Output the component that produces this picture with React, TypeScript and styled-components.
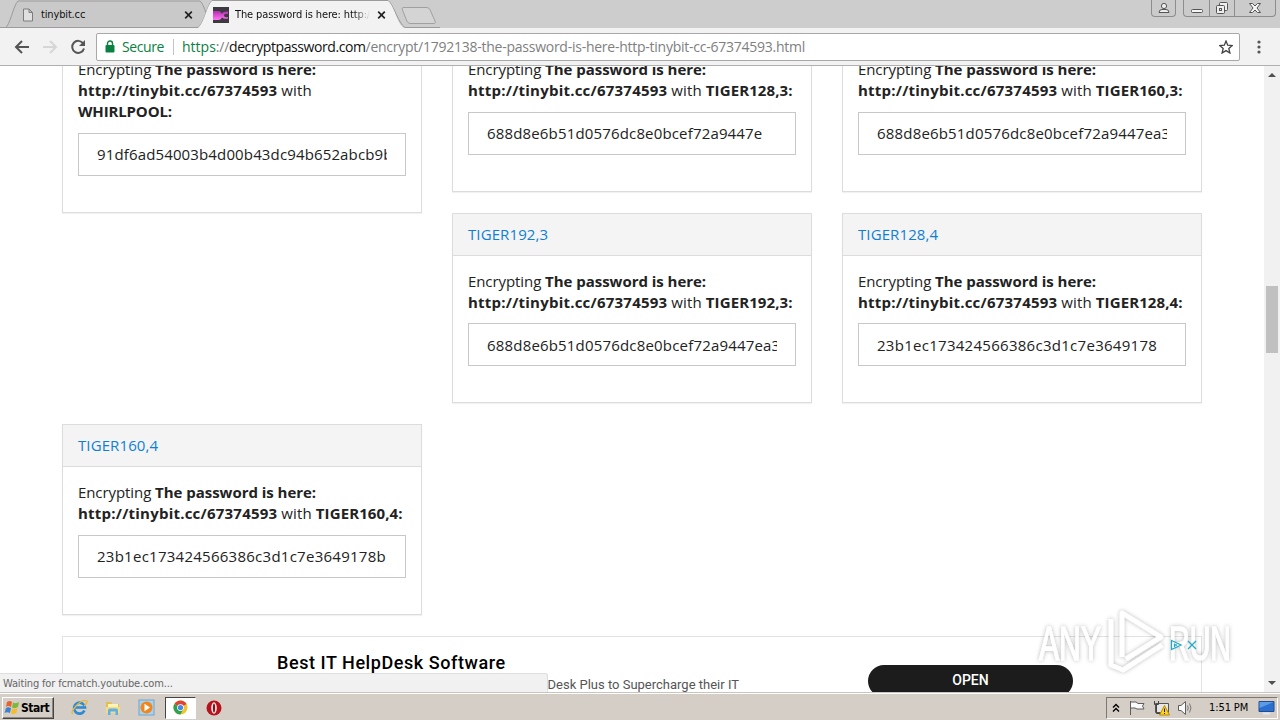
import React from 'react';
import styled, { createGlobalStyle } from 'styled-components';

const Global = createGlobalStyle`
  * { box-sizing: border-box; }
  body { margin: 0; background: #fff; overflow: hidden; }
`;

const ui = `'DejaVu Sans Condensed', 'DejaVu Sans', sans-serif`;

const Screen = styled.div`
  width: 1280px;
  height: 720px;
  display: flex;
  flex-direction: column;
  overflow: hidden;
  background: #fff;
`;

/* ---------- browser chrome ---------- */
const TabStrip = styled.header`
  position: relative;
  height: 28px;
  flex: none;
  display: flex;
  background: #cdcdcd;
`;
const TabShapes = styled.svg`
  position: absolute;
  left: 0;
  top: 0;
`;
const Tab = styled.div<{ $width: number; $pad: number }>`
  position: relative;
  width: ${p => p.$width}px;
  padding: 1px 0 0 ${p => p.$pad}px;
  display: flex;
  align-items: center;
`;
const TabTitle = styled.span<{ $width: number; $gap: number; $fade?: boolean; $track: number }>`
  width: ${p => p.$width}px;
  margin-left: ${p => p.$gap}px;
  overflow: hidden;
  white-space: nowrap;
  font: 11px/16px ${ui};
  letter-spacing: ${p => p.$track}px;
  color: #111;
  ${p => p.$fade && 'mask-image: linear-gradient(90deg, #000 88%, transparent);'}
`;
const WindowControls = styled.div`
  position: relative;
  margin-left: auto;
  display: flex;
  gap: 7px;
  padding-right: 4px;
  height: 17px;
`;
const ControlGroup = styled.div`
  display: flex;
  border: 1px solid #8d8d8d;
  border-top: 0;
  border-radius: 0 0 4px 4px;
  background: #cbcbcb;
`;
const Control = styled.div<{ $width: number }>`
  width: ${p => p.$width}px;
  display: flex;
  justify-content: center;
  align-items: center;
  & + & { border-left: 1px solid #8d8d8d; }
`;
const Toolbar = styled.div`
  height: 38px;
  flex: none;
  display: flex;
  align-items: center;
  background: #f2f2f2;
  border-bottom: 1px solid #b0b0b0;
`;
const NavButtons = styled.div`
  width: 96px;
  padding-left: 14px;
  display: flex;
  gap: 12px;
`;
const AddressBar = styled.div`
  width: 1144px;
  height: 28px;
  padding: 0 6px 0 8px;
  display: flex;
  align-items: center;
  border: 1px solid #a8a8a8;
  border-radius: 2px;
  background: #fff;
  font: 14px/20px 'Open Sans', sans-serif;
`;
const Secure = styled.span`
  margin-left: 7px;
  padding-right: 9px;
  border-right: 1px solid #c4c4c4;
  line-height: 16px;
  letter-spacing: -0.4px;
  color: #0b8043;
`;
const Url = styled.span`
  flex: 1;
  margin-left: 8px;
  white-space: nowrap;
  letter-spacing: -0.25px;
  color: #808080;
  i { font-style: normal; letter-spacing: 0; color: #0b8043; }
  b { font-weight: 400; letter-spacing: -0.42px; color: #111; }
`;
const MenuDots = styled.div`
  flex: 1;
  display: flex;
  justify-content: center;
  padding-right: 3px;
`;

/* ---------- page ---------- */
const Viewport = styled.div`
  position: relative;
  height: 626px;
  flex: none;
  display: flex;
  overflow: hidden;
`;
const Page = styled.main`
  width: 1264px;
  margin-top: -64.6px;
  padding-left: 62px;
`;
const Grid = styled.section`
  display: grid;
  grid-template-columns: repeat(3, 360px);
  grid-template-rows: repeat(3, 190.5px);
  gap: 21px 30px;
  align-items: start;
`;
const Card = styled.article<{ $col: number; $row: number; $span?: number }>`
  grid-column: ${p => p.$col};
  grid-row: ${p => p.$row} / span ${p => p.$span ?? 1};
  border: 1px solid #dcdcdc;
  box-shadow: 0 1px 1px rgba(0, 0, 0, 0.05);
  font: 15px/21px 'Open Sans', sans-serif;
  color: #222;
`;
const CardTitle = styled.h3`
  margin: 0;
  height: 42px;
  padding: 10px 15px;
  border-bottom: 1px solid #dcdcdc;
  background: #f4f4f4;
  font: inherit;
  letter-spacing: 0.1px;
  color: #0f7fd4;
`;
const CardBody = styled.div`
  padding: 15px 15px 36px;
`;
const Caption = styled.p`
  margin: 0 -6px 10.4px 0;
`;
const Run = styled.span<{ $track: number; $bold?: boolean }>`
  font-weight: ${p => (p.$bold ? 700 : 400)};
  letter-spacing: ${p => p.$track}px;
`;
const HashField = styled.div<{ $track: number }>`
  height: 43px;
  padding: 0.4px 18px 0;
  border: 1px solid #c8c8c8;
  line-height: 41px;
  letter-spacing: ${p => p.$track}px;
  span { display: block; overflow: hidden; white-space: nowrap; }
`;
const Ad = styled.section`
  position: relative;
  width: 1140px;
  height: 90px;
  margin-top: 21px;
  border: 1px solid #e2e2e2;
  display: flex;
  font-family: Roboto, sans-serif;
`;
const AdCopy = styled.div`
  width: 805px;
  padding: 14px 0 0 214px;
`;
const AdTitle = styled.div`
  font-size: 18px;
  line-height: 23px;
  font-weight: 500;
  letter-spacing: 0.56px;
  color: #000;
`;
const AdText = styled.div`
  width: 462px;
  margin-top: 1px;
  text-align: right;
  white-space: nowrap;
  font-size: 13px;
  line-height: 20px;
  color: #555;
`;
const OpenButton = styled.div`
  width: 205px;
  height: 32px;
  margin-top: 28px;
  border-radius: 16px;
  background: #1c1c1c;
  color: #fff;
  font-size: 14px;
  line-height: 30px;
  font-weight: 500;
  text-align: center;
`;
const AdChoices = styled.svg`
  position: absolute;
  z-index: 2;
  right: 0;
  top: 0;
`;
const Scrollbar = styled.div`
  width: 16px;
  height: 626px;
  padding: 7px 2px 7px 2px;
  display: flex;
  flex-direction: column;
  justify-content: space-between;
  align-items: center;
  background: #f1f1f1;
`;
const Thumb = styled.div`
  width: 12px;
  height: 67px;
  margin-bottom: 120px;
  background: #c0c0c0;
`;
const Status = styled.div`
  position: absolute;
  left: 0;
  bottom: 0;
  width: 548px;
  height: 19px;
  padding-left: 3px;
  border: 1px solid #dedede;
  border-width: 1px 1px 0 0;
  border-radius: 0 3px 0 0;
  background: #f1f1f1;
  font: 11px/19px ${ui};
  color: #666;
  letter-spacing: -0.15px;
`;
const Watermark = styled.svg`
  position: absolute;
  left: 1028px;
  top: 536px;
`;

/* ---------- taskbar ---------- */
const Taskbar = styled.footer`
  height: 28px;
  flex: none;
  display: flex;
  align-items: center;
  padding-top: 2px;
  border-top: 1px solid #c9c5be;
  box-shadow: inset 0 1px #fff;
  background: #d5cec7;
`;
const Start = styled.div`
  width: 52px;
  height: 22px;
  margin-left: 2px;
  padding-left: 1px;
  display: flex;
  align-items: center;
  gap: 1px;
  border: 1px solid;
  border-color: #fff #444 #444 #fff;
  box-shadow: inset -1px -1px #8c8780;
  font: bold 12px/18px ${ui};
  letter-spacing: -0.5px;
  color: #000;
`;
const Launch = styled.div`
  display: flex;
  align-items: center;
  margin-left: 9px;
`;
const Slot = styled.div<{ $active?: boolean }>`
  width: ${p => (p.$active ? 31 : 33.6)}px;
  height: 22px;
  display: flex;
  align-items: center;
  justify-content: center;
  ${p => p.$active && 'border: 1px solid; border-color: #444 #fff #fff #444; background: #fff; margin: 0 1px;'}
`;
const Tray = styled.div`
  width: 172px;
  height: 22px;
  margin: 0 2px 0 auto;
  padding: 0 0 0 5px;
  display: flex;
  align-items: center;
  border: 1px solid;
  border-color: #7d7871 #fff #fff #7d7871;
  font: 11px/20px ${ui};
  color: #000;
`;
const Clock = styled.span`
  width: 40px;
  margin: 0 9px 0 17px;
  letter-spacing: -0.1px;
  white-space: nowrap;
`;

const cards = [
  { name: 'WHIRLPOOL', hash: '91df6ad54003b4d00b43dc94b652abcb9b7', col: 1, row: 1, span: 2, track: 0.14, nameTrack: -0.15 },
  { name: 'TIGER128,3', hash: '688d8e6b51d0576dc8e0bcef72a9447e', col: 2, row: 1, track: 0.16, nameTrack: 0.1 },
  { name: 'TIGER160,3', hash: '688d8e6b51d0576dc8e0bcef72a9447ea35', col: 3, row: 1, track: 0.18, nameTrack: 0.1 },
  { name: 'TIGER192,3', hash: '688d8e6b51d0576dc8e0bcef72a9447ea35', col: 2, row: 2, track: 0.18, nameTrack: 0.1 },
  { name: 'TIGER128,4', hash: '23b1ec173424566386c3d1c7e3649178', col: 3, row: 2, track: 0.28, nameTrack: 0.1 },
  { name: 'TIGER160,4', hash: '23b1ec173424566386c3d1c7e3649178b', col: 1, row: 3, track: 0.26, nameTrack: 0.1 },
];

const CloseX = () => (
  <svg width="9" height="8" viewBox="-.5 0 9 8"><path d="M.7.7l6.6 6.6M7.3.7L.7 7.3" stroke="#222" strokeWidth="1.7" /></svg>
);

const Tabs = () => (
  <TabStrip>
    <TabShapes width="440" height="28">
      <path d="M5 28C10 26 13 6 18 1H200C205 5 207 20 212 28Z" fill="#c9c9c9" stroke="#9b9b9b" />
      <path d="M0 27.5H198C204 24 207 5 212 .5H388C394 5 398 23 405 27.5H440" fill="none" stroke="#9b9b9b" />
      <path d="M198 28C204 24 207 5 212 1H388C394 5 397 24 404 28Z" fill="#f2f2f2" />
      <path d="M404 7.5H426C429 7.500 430 9 431 12L435 21C436 23 435 23.500 433 23.500H411C408 23.500 407 22 406 19L402.500 10C402 8 402 7.500 404 7.500Z" fill="#d4d4d4" stroke="#a0a0a0" />
    </TabShapes>
    <Tab $width={213} $pad={22}>
      <svg width="12" height="14" viewBox="0 0 12 14"><path d="M1.500 1H7L10.500 4.500V13H1.500ZM7 1V4.500H10.500" fill="#e0e0e0" stroke="#7c7c7c" /></svg>
      <TabTitle $width={143} $gap={7} $track={-0.15}>tinybit.cc</TabTitle>
      <CloseX />
    </Tab>
    <Tab $width={190} $pad={0}>
      <svg width="16" height="16" viewBox="0 0 16 16">
        <defs><linearGradient id="fav" x1="0" y1="0" x2="0" y2="1"><stop stopColor="#b52bb0" /><stop offset="1" stopColor="#ff78f2" /></linearGradient></defs>
        <path d="M0 0h16v16H0z" fill="#3c3a40" />
        <path d="M0 4H5Q8 4 8.800 7Q10 4 15 4.500V7Q11 6 11 8.500T15 10V11.500Q11 12.500 9 10.500Q8 13 5 13H0Z" fill="url(#fav)" />
      </svg>
      <TabTitle $width={135} $gap={6} $track={-0.12} $fade>The password is here: http://t</TabTitle>
      <svg width="7" />
      <CloseX />
    </Tab>
    <WindowControls>
      <ControlGroup>
        <Control $width={23}>
          <svg width="12" height="12" viewBox="0 0 12 12" fill="#eee" stroke="#555"><path d="M1 10.500Q1 7.500 4 7.500H8Q11 7.500 11 10.500Z" /><circle cx="6" cy="4" r="2.600" /></svg>
        </Control>
      </ControlGroup>
      <ControlGroup>
        <Control $width={25}>
          <svg width="14" height="14" viewBox="0 0 14 14"><rect x="1.500" y="8.500" width="11" height="3" rx="1" fill="#f5f5f5" stroke="#555" /></svg>
        </Control>
        <Control $width={25}>
          <svg width="14" height="14" viewBox="0 0 14 14" fill="#eee" stroke="#555"><rect x="4.500" y="1.500" width="8" height="8" rx="1" /><rect x="1.500" y="4.500" width="8" height="8" rx="1" /><rect x="4.500" y="7.500" width="2" height="2" /></svg>
        </Control>
        <Control $width={41}>
          <svg width="14" height="12" viewBox="0 0 14 12"><path d="M1.500 1.500H4.500L7 4L9.500 1.500H12.500L9 6L12.500 10.500H9.500L7 8L4.500 10.500H1.500L5 6Z" fill="#f5f5f5" stroke="#555" /></svg>
        </Control>
      </ControlGroup>
    </WindowControls>
  </TabStrip>
);

const BrowserBar = () => (
  <Toolbar>
    <NavButtons>
      <svg width="16" height="16" viewBox="0 0 16 16" fill="none" stroke="#555" strokeWidth="2"><path d="M15 8H2.500M8 2L2 8L8 14" /></svg>
      <svg width="16" height="16" viewBox="0 0 16 16" fill="none" stroke="#d6d6d6" strokeWidth="2"><path d="M1 8H13.500M8 2L14 8L8 14" /></svg>
      <svg width="16" height="16" viewBox="0 0 16 16"><path d="M13.200 4.500A6 6 0 1 0 14 9.500" fill="none" stroke="#555" strokeWidth="2" /><path d="M15 1V7H9Z" fill="#555" /></svg>
    </NavButtons>
    <AddressBar>
      <svg width="10" height="13" viewBox="0 0 10 13"><rect x=".5" y="5" width="9" height="7.500" rx="1" fill="#0b8043" /><path d="M2.500 6V3.500a2.500 2.500 0 0 1 5 0V6" fill="none" stroke="#0b8043" strokeWidth="1.400" /></svg>
      <Secure>Secure</Secure>
      <Url><i>https</i>://<b>decryptpassword.com</b>/encrypt/1792138-the-password-is-here-http-tinybit-cc-67374593.html</Url>
      <svg width="14" height="14" viewBox="0 0 14 14"><path d="M7 1L8.700 5.200L13.200 5.500L9.800 8.500L10.900 13L7 10.600L3.100 13L4.200 8.500L.8 5.500L5.300 5.200Z" fill="none" stroke="#444" strokeWidth="1.300" /></svg>
    </AddressBar>
    <MenuDots>
      <svg width="4" height="14" viewBox="0 0 4 14" fill="#555"><circle cx="2" cy="2" r="1.600" /><circle cx="2" cy="7" r="1.600" /><circle cx="2" cy="12" r="1.600" /></svg>
    </MenuDots>
  </Toolbar>
);

export default function App() {
  return (
    <Screen>
      <Global />
      <Tabs />
      <BrowserBar />
      <Viewport>
        <Page>
          <Grid>
            {cards.map(c => (
              <Card key={c.name} $col={c.col} $row={c.row} $span={c.span}>
                <CardTitle>{c.row > 1 && c.name}</CardTitle>
                <CardBody>
                  <Caption>
                    <Run $track={-0.08}>Encrypting </Run>
                    <Run $bold $track={-0.03}>The password is here:</Run><br />
                    <Run $bold $track={0.22}>http://tinybit.cc/67374593</Run>
                    <Run $track={0.12}> with </Run>
                    {c.span && <br />}
                    <Run $bold $track={c.nameTrack}>{c.name}:</Run>
                  </Caption>
                  <HashField $track={c.track}><span>{c.hash}</span></HashField>
                </CardBody>
              </Card>
            ))}
          </Grid>
          <Ad>
            <AdCopy>
              <AdTitle>Best IT HelpDesk Software</AdTitle>
              <AdText>eDesk Plus to Supercharge their IT</AdText>
            </AdCopy>
            <OpenButton>OPEN</OpenButton>
            <AdChoices width="32" height="16" viewBox="0 0 32 16" fill="none" stroke="#24a9c6" strokeWidth="1.300">
              <path d="M2.500 3.500L12 8L2.500 12.500ZM5.500 6.500V10M5.500 8H8" /><path d="M19 4L27 12M27 4L19 12" />
            </AdChoices>
          </Ad>
        </Page>
        <Scrollbar>
          <svg width="8" height="4"><path d="M0 4L4 0L8 4Z" fill="#505050" /></svg>
          <Thumb />
          <svg width="8" height="4"><path d="M0 0L4 4L8 0Z" fill="#505050" /></svg>
        </Scrollbar>
        <Status>Waiting for fcmatch.youtube.com...</Status>
        <Watermark width="216" height="80" viewBox="0 0 216 80">
          <defs><filter id="glow" x="-10%" y="-10%" width="120%" height="120%"><feDropShadow dx="0" dy="0" stdDeviation="2" floodColor="#000" floodOpacity=".3" /></filter></defs>
          <g filter="url(#glow)" fill="#fff" stroke="#fff" fontFamily="Liberation Sans, sans-serif" fontSize="49">
            <text x="11" y="58" textLength="62" lengthAdjust="spacingAndGlyphs">ANY</text>
            <text x="141" y="58" textLength="62" lengthAdjust="spacingAndGlyphs">RUN</text>
            <path d="M94 55V11L133 35L98 57M94 30V55M83 17V63L95 68L134 43" fill="none" strokeWidth="4.500" strokeLinejoin="round" />
          </g>
        </Watermark>
      </Viewport>
      <Taskbar>
        <Start>
          <svg width="16" height="16" viewBox="0 0 16 16"><path d="M3 2Q6 0 8 2L7 7Q4 5 2 7Z" fill="#e8622c" /><path d="M9 2.500Q12 4 15 2L14 7Q11 9 8 7.500Z" fill="#7db83a" /><path d="M2 8Q4 6.500 7 8L6 13Q3 11.500 .5 13Z" fill="#3d82cf" /><path d="M8 8.500Q10 10 13.500 8L12.500 13Q9 15 7 13.500Z" fill="#f4bd2d" /></svg>
          Start
        </Start>
        <Launch>
          <Slot>
            <svg width="17" height="17" viewBox="0 0 17 17" fill="none"><path d="M13.500 11.500A5.500 5.500 0 1 1 14 8.500H4.500" stroke="#2a8bd6" strokeWidth="2.700" /><path d="M2 15Q-1 14 5 7T16 2Q17 4 13 7" stroke="#e8b83a" strokeWidth="1.300" /></svg>
          </Slot>
          <Slot>
            <svg width="16" height="16" viewBox="0 0 16 16"><path d="M1 2H6L7 4H14V13H1Z" fill="#e2bd50" /><path d="M3 4H13V7H3Z" fill="#fff3b8" /><path d="M1 7H15V13H1Z" fill="#f5dc82" /><path d="M3 15V10Q3 8.500 5 8.500H11Q13 8.500 13 10V15H10.500V11.500H5.500V15Z" fill="#5fb0e4" /></svg>
          </Slot>
          <Slot>
            <svg width="17" height="17" viewBox="0 0 17 17"><rect x="1" y="1" width="15" height="15" fill="#a9d2ee" stroke="#6ea6d0" /><circle cx="8.500" cy="8.500" r="6" fill="#f0861c" /><path d="M6.500 4.800L12 8.500L6.500 12.200Z" fill="#fff" /></svg>
          </Slot>
          <Slot $active>
            <svg width="15" height="15" viewBox="0 0 16 16"><circle cx="8" cy="8" r="7.500" fill="#f2c52c" /><path d="M8 8L1.500 4.250A7.500 7.500 0 0 1 14.500 4.250Z" fill="#dd4438" /><path d="M8 8L1.500 4.250A7.500 7.500 0 0 0 8 15.500L11 9.700Z" fill="#2fa153" /><circle cx="8" cy="8" r="3.600" fill="#fff" /><circle cx="8" cy="8" r="2.800" fill="#4a86e8" /></svg>
          </Slot>
          <Slot>
            <svg width="16" height="16" viewBox="0 0 16 16"><circle cx="8" cy="8" r="7.500" fill="#b5121b" /><ellipse cx="8" cy="8" rx="2.800" ry="5.800" fill="#f8eaea" /><ellipse cx="8" cy="8" rx="1.100" ry="4.600" fill="#8e0d14" /></svg>
          </Slot>
        </Launch>
        <Tray>
          <svg width="8" height="10" viewBox="0 0 8 10" fill="none" stroke="#000" strokeWidth="1.400"><path d="M1 4.500L4 1.500L7 4.500M1 8.500L4 5.500L7 8.500" /></svg>
          <svg width="72" height="18" viewBox="0 0 72 18">
            <path d="M10.500 2V16M10.500 3H16L18 4.500H24L22.500 7L24 10H17L15 9H10.500" fill="#fafafa" stroke="#5d5d5d" />
            <path d="M35.500 4.500H48.500V13.500H35.500Z" fill="#e6e6e6" stroke="#555" /><path d="M34.500 2V5.500H38.500V2M36.500 6V14.500H42" fill="none" stroke="#444" />
            <path d="M44.500 6.500L49.500 16H39.500Z" fill="#ffd21e" stroke="#b88b00" /><path d="M44.500 9.500V13M44.500 14V15" stroke="#222" />
            <path d="M58.500 6.500H61L65.500 2.500V15.500L61 11.500H58.500Z" fill="#fafafa" stroke="#5d5d5d" /><path d="M67.500 6.500Q69 9 67.500 11.500M69.500 4.500Q72.500 9 69.500 13.500" fill="none" stroke="#777" />
          </svg>
          <Clock>1:51 PM</Clock>
          <svg width="17" height="15" viewBox="0 0 17 15"><path d="M1 1.500H16V11.500H1Z" fill="#2b6fd0" stroke="#244c86" /><path d="M1.500 2H15.500L1.500 8Z" fill="#5c9be8" /><path d="M5 13.500H12" stroke="#dfe8f2" strokeWidth="2" /></svg>
        </Tray>
      </Taskbar>
    </Screen>
  );
}
